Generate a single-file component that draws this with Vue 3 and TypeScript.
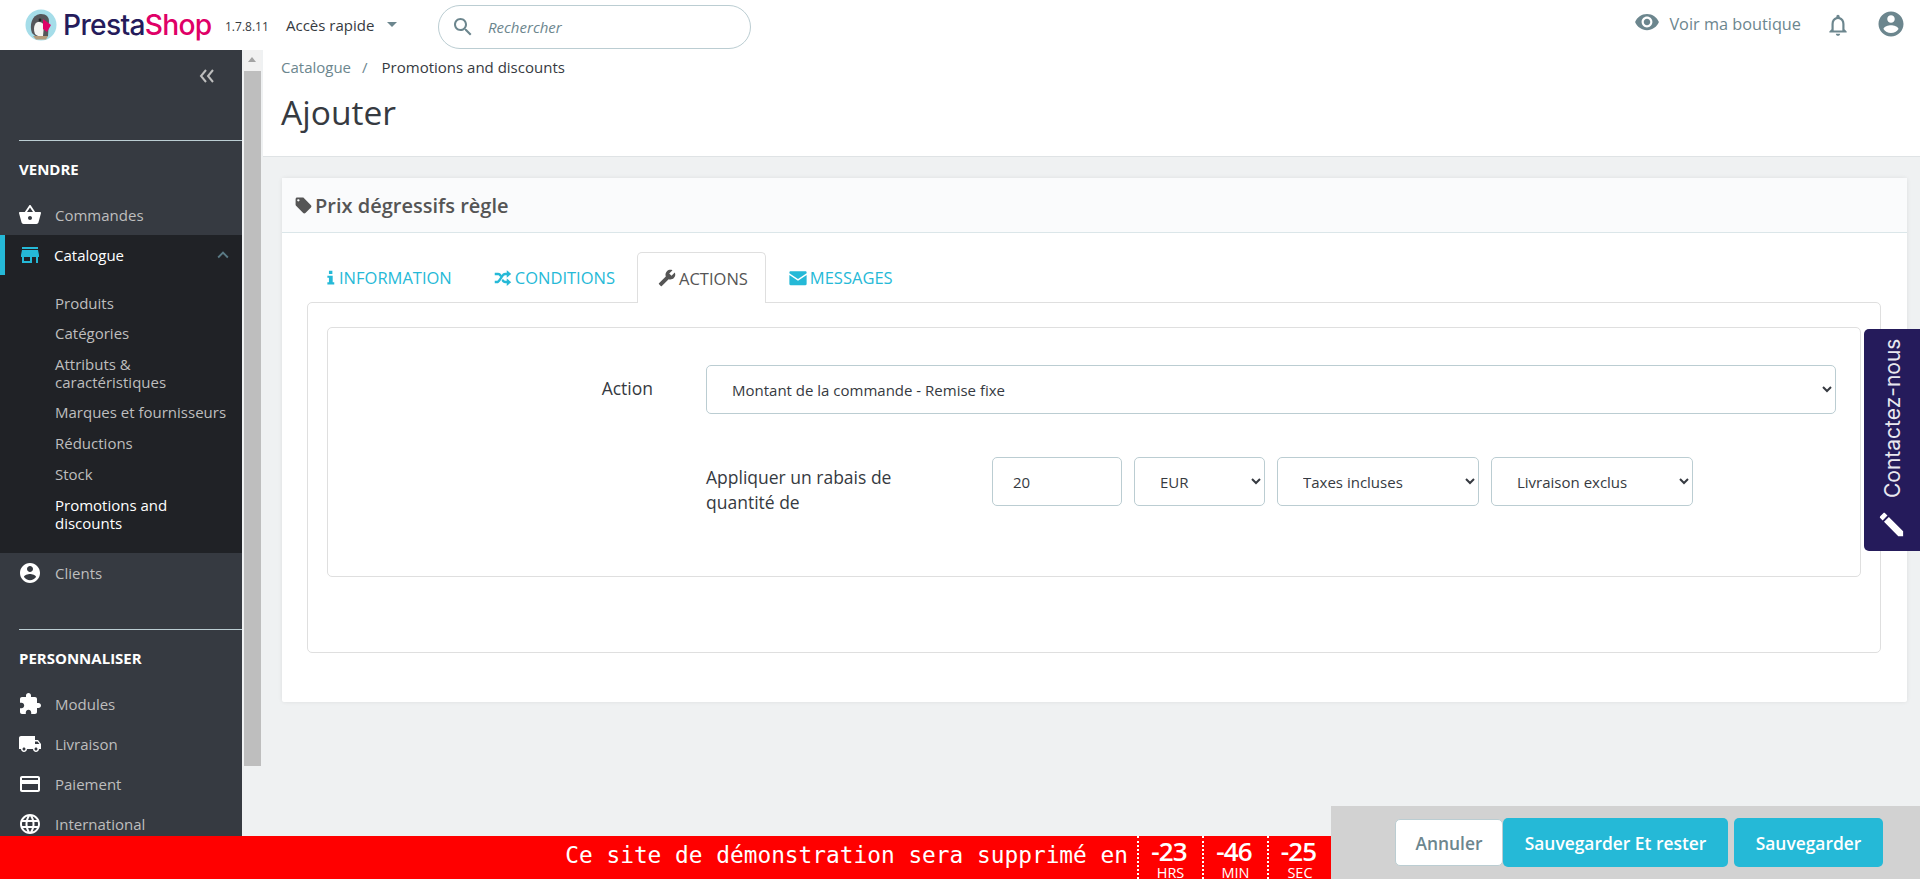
<script setup lang="ts">
const icons: Record<string, string> = {
  basket: 'M17.21 9l-4.38-6.56c-.19-.28-.51-.42-.83-.42-.32 0-.64.14-.83.43L6.79 9H2c-.55 0-1 .45-1 1 0 .09.01.18.04.27l2.54 9.27c.23.84 1 1.46 1.92 1.46h13c.92 0 1.69-.62 1.93-1.46l2.54-9.27L23 10c0-.55-.45-1-1-1h-4.79zM9 9l3-4.4L15 9H9zm3 8c-1.1 0-2-.9-2-2s.9-2 2-2 2 .9 2 2-.9 2-2 2z',
  store: 'M20 4H4v2h16V4zm1 10v-2l-1-5H4l-1 5v2h1v6h10v-6h4v6h2v-6h1zm-9 4H6v-4h6v4z',
  account: 'M12 2C6.48 2 2 6.48 2 12s4.48 10 10 10 10-4.48 10-10S17.52 2 12 2zm0 3c1.66 0 3 1.34 3 3s-1.34 3-3 3-3-1.34-3-3 1.34-3 3-3zm0 14.2c-2.5 0-4.71-1.28-6-3.22.03-1.99 4-3.08 6-3.08 1.99 0 5.97 1.09 6 3.08-1.29 1.94-3.5 3.22-6 3.22z',
  puzzle: 'M20.5 11H19V7c0-1.1-.9-2-2-2h-4V3.5C13 2.12 11.88 1 10.5 1S8 2.12 8 3.5V5H4c-1.1 0-1.99.9-1.99 2v3.8H3.5c1.49 0 2.7 1.21 2.7 2.7s-1.21 2.7-2.7 2.7H2V20c0 1.1.9 2 2 2h3.8v-1.5c0-1.49 1.21-2.7 2.7-2.7 1.49 0 2.7 1.21 2.7 2.7V22H17c1.1 0 2-.9 2-2v-4h1.5c1.38 0 2.5-1.12 2.5-2.5S21.88 11 20.5 11z',
  truck: 'M20 8h-3V4H3c-1.1 0-2 .9-2 2v11h2c0 1.66 1.34 3 3 3s3-1.34 3-3h6c0 1.66 1.34 3 3 3s3-1.34 3-3h2v-5l-3-4zM6 18.5c-.83 0-1.5-.67-1.5-1.5s.67-1.5 1.5-1.5 1.5.67 1.5 1.5-.67 1.5-1.5 1.5zm13.5-9l1.96 2.5H17V9.5h2.5zm-1.5 9c-.83 0-1.5-.67-1.5-1.5s.67-1.5 1.5-1.5 1.5.67 1.5 1.5-.67 1.5-1.5 1.5z',
  card: 'M20 4H4c-1.11 0-1.99.89-1.99 2L2 18c0 1.11.89 2 2 2h16c1.11 0 2-.89 2-2V6c0-1.11-.89-2-2-2zm0 14H4v-6h16v6zm0-10H4V6h16v2z',
  globe: 'M11.99 2C6.47 2 2 6.48 2 12s4.47 10 9.99 10C17.52 22 22 17.52 22 12S17.52 2 11.99 2zm6.93 6h-2.95c-.32-1.25-.78-2.45-1.38-3.56 1.84.63 3.37 1.91 4.33 3.56zM12 4.04c.83 1.2 1.48 2.53 1.91 3.96h-3.82c.43-1.43 1.08-2.76 1.91-3.96zM4.26 14C4.1 13.36 4 12.69 4 12s.1-1.36.26-2h3.38c-.08.66-.14 1.32-.14 2 0 .68.06 1.34.14 2H4.26zm.82 2h2.95c.32 1.25.78 2.45 1.38 3.56-1.84-.63-3.37-1.9-4.33-3.56zm2.95-8H5.08c.96-1.66 2.49-2.93 4.33-3.56C8.81 5.55 8.35 6.75 8.03 8zM12 19.96c-.83-1.2-1.48-2.53-1.91-3.96h3.82c-.43 1.43-1.08 2.76-1.91 3.96zM14.34 14H9.66c-.09-.66-.16-1.32-.16-2 0-.68.07-1.35.16-2h4.68c.09.65.16 1.32.16 2 0 .68-.07 1.34-.16 2zm.25 5.56c.6-1.11 1.06-2.31 1.38-3.56h2.95c-.96 1.65-2.49 2.93-4.33 3.56zM16.36 14c.08-.66.14-1.32.14-2 0-.68-.06-1.34-.14-2h3.38c.16.64.26 1.31.26 2s-.1 1.36-.26 2h-3.38z',
  eye: 'M12 4.5C7 4.5 2.73 7.61 1 12c1.73 4.39 6 7.5 11 7.5s9.27-3.11 11-7.5c-1.73-4.39-6-7.5-11-7.5zM12 17c-2.76 0-5-2.24-5-5s2.24-5 5-5 5 2.24 5 5-2.24 5-5 5zm0-8c-1.66 0-3 1.34-3 3s1.34 3 3 3 3-1.34 3-3-1.34-3-3-3z',
  bell: 'M12 22c1.1 0 2-.9 2-2h-4c0 1.1.9 2 2 2zm6-6v-5c0-3.07-1.63-5.64-4.5-6.32V4c0-.83-.67-1.5-1.5-1.5s-1.5.67-1.5 1.5v.68C7.64 5.36 6 7.92 6 11v5l-2 2v1h16v-1l-2-2zm-2 1H8v-6c0-2.48 1.51-4.5 4-4.5s4 2.02 4 4.5v6z',
  search: 'M15.5 14h-.79l-.28-.27C15.41 12.59 16 11.11 16 9.5 16 5.91 13.09 3 9.5 3S3 5.91 3 9.5 5.91 16 9.5 16c1.61 0 3.09-.59 4.23-1.57l.27.28v.79l5 4.99L20.49 19l-4.99-5zm-6 0C7.01 14 5 11.99 5 9.5S7.01 5 9.5 5 14 7.01 14 9.5 11.99 14 9.5 14z',
  up: 'M12 8l-6 6 1.41 1.41L12 10.83l4.59 4.58L18 14z',
  info: 'M7 9h8.500v10.500H18V23H7v-3.500h2.500V12.500H7zM9.500 1h5.500v5.500H9.500z',
  shuffle: 'M1 5h4.500c2 0 3.300 1.200 4.600 3L8.200 10.600C7.200 9.200 6.400 8.300 5.300 8.300H1zM17 1.500l6 5-6 5V8.300h-2c-1.300 0-2.200 1.200-3.200 2.800l-3.600 5.200C6.900 18 5.800 19 4 19H1v-3.300h2.800c1 0 1.700-.8 2.500-2l3.400-5C11 6.800 12.500 5 15 5h2zM17 12.500l6 5-6 5V19h-2c-2.300 0-3.700-1.500-5-3.300l1.900-2.700c1 1.500 1.900 2.700 3.100 2.700h2z',
  wrench: 'M1.300 19l9.100-9.100c-.9-2.300-.4-5 1.500-6.900 2-2 5-2.400 7.400-1.300L15 6l3 3 4.400-4.300c1.200 2.400.7 5.400-1.300 7.400-1.900 1.900-4.600 2.400-6.900 1.500l-9.100 9.100c-.4.4-1 .4-1.400 0l-2.300-2.300c-.5-.4-.5-1.100-.1-1.400z',
  mail: 'M.500 4.500C.500 3.700 1.200 3 2 3h20c.800 0 1.500.7 1.500 1.500v1L12 13.200.500 5.500zM.500 8L12 15.700 23.500 8v12c0 .8-.7 1.500-1.500 1.500H2C1.200 21.500.500 20.800.500 20z',
  tag: 'M21.41 11.58l-9-9C12.05 2.22 11.55 2 11 2H4c-1.1 0-2 .9-2 2v7c0 .55.22 1.05.59 1.42l9 9c.36.36.86.58 1.41.58.55 0 1.05-.22 1.41-.59l7-7c.37-.36.59-.86.59-1.41 0-.55-.23-1.06-.59-1.42zM5.500 7C4.670 7 4 6.330 4 5.500S4.670 4 5.500 4 7 4.670 7 5.500 6.330 7 5.500 7z',
  pencil: 'M3 17.25V21h3.75L17.81 9.94l-3.75-3.75L3 17.25zM20.71 7.04c.39-.39.39-1.02 0-1.41l-2.34-2.34c-.39-.39-1.02-.39-1.41 0l-1.83 1.83 3.75 3.75 1.83-1.83z',
}

const subItems = [
  { label: 'Produits' },
  { label: 'Catégories' },
  { label: 'Attributs & caractéristiques' },
  { label: 'Marques et fournisseurs' },
  { label: 'Réductions' },
  { label: 'Stock' },
  { label: 'Promotions and discounts', active: true },
]

const shopItems = [
  { label: 'Modules', icon: 'puzzle' },
  { label: 'Livraison', icon: 'truck' },
  { label: 'Paiement', icon: 'card' },
  { label: 'International', icon: 'globe' },
]

const tabs = [
  { label: 'INFORMATION', icon: 'info' },
  { label: 'CONDITIONS', icon: 'shuffle' },
  { label: 'ACTIONS', icon: 'wrench', active: true },
  { label: 'MESSAGES', icon: 'mail' },
]

const counters = [
  { value: '-23', unit: 'HRS' },
  { value: '-46', unit: 'MIN' },
  { value: '-25', unit: 'SEC' },
]
</script>

<template>
  <div class="app">
    <header class="topbar">
      <div class="logo">
        <svg class="logo-mark" viewBox="0 0 32 32" width="32" height="32">
          <circle cx="16" cy="16" r="15.500" fill="#a5dde9" />
          <path d="M7 24C4 16 7 6 15 5c6-.5 9 3 9 7l-1 15c-5 3-12 2-16-3z" fill="#55565a" />
          <path d="M10 25c-2-5-1-11 3-12 3-.5 5 1 6 3l-1 11c-3 1-6 0-8-2z" fill="#f4f4f2" />
          <circle cx="15" cy="11" r="1.400" fill="#222" />
          <path d="M18 10l8 6-4 7-4-3z" fill="#df0067" />
          <path d="M8 27h15l-2 3.500H11z" fill="#b29a7a" />
        </svg>
        <span class="logo-text"><span class="presta">Presta</span><span class="shop">Shop</span></span>
      </div>
      <span class="version">1.7.8.11</span>
      <div class="quick">Accès rapide<span class="caret"></span></div>
      <div class="search">
        <svg class="search-icon" viewBox="0 0 24 24"><path :d="icons.search" /></svg>
        <input class="search-input" type="text" placeholder="Rechercher" />
      </div>
      <div class="top-right">
        <svg class="ico-eye" viewBox="0 0 24 24"><path :d="icons.eye" /></svg>
        <span class="shop-link">Voir ma boutique</span>
        <svg class="ico-bell" viewBox="0 0 24 24"><path :d="icons.bell" /></svg>
        <svg class="ico-user" viewBox="0 0 24 24"><path :d="icons.account" /></svg>
      </div>
    </header>

    <div class="body">
      <aside class="sidebar">
        <div class="collapse">
          <svg viewBox="0 0 18 14" width="18" height="14">
            <path d="M8 1L3 7l5 6M15 1l-5 6 5 6" fill="none" stroke="#bebebe" stroke-width="2" />
          </svg>
        </div>
        <div class="section-title">VENDRE</div>
        <div class="nav-row">
          <svg class="nav-ico" viewBox="0 0 24 24"><path :d="icons.basket" /></svg>
          <span>Commandes</span>
        </div>
        <div class="open-group">
          <div class="nav-row active">
            <svg class="nav-ico" viewBox="0 0 24 24"><path :d="icons.store" /></svg>
            <span>Catalogue</span>
            <svg class="chev" viewBox="0 0 24 24"><path :d="icons.up" /></svg>
          </div>
          <ul class="sub">
            <li v-for="s in subItems" :key="s.label" :class="{ on: s.active }">{{ s.label }}</li>
          </ul>
        </div>
        <div class="nav-row">
          <svg class="nav-ico" viewBox="0 0 24 24"><path :d="icons.account" /></svg>
          <span>Clients</span>
        </div>
        <div class="section-title second">PERSONNALISER</div>
        <div v-for="n in shopItems" :key="n.label" class="nav-row">
          <svg class="nav-ico" viewBox="0 0 24 24"><path :d="icons[n.icon]" /></svg>
          <span>{{ n.label }}</span>
        </div>
      </aside>

      <div class="scroll">
        <div class="scroll-arrow"></div>
        <div class="scroll-thumb"></div>
      </div>

      <main class="main">
        <div class="page-head">
          <div class="crumbs">
            <span class="crumb">Catalogue</span>
            <span class="slash">/</span>
            <span class="crumb-cur">Promotions and discounts</span>
          </div>
          <h1>Ajouter</h1>
        </div>

        <section class="panel">
          <div class="panel-head">
            <svg class="tag" viewBox="0 0 24 24"><path :d="icons.tag" /></svg>
            <span>Prix dégressifs règle</span>
          </div>
          <div class="panel-body">
            <div class="tabs">
              <div v-for="t in tabs" :key="t.label" class="tab" :class="{ active: t.active }">
                <svg class="tab-ico" viewBox="0 0 24 24"><path :d="icons[t.icon]" /></svg>
                <span>{{ t.label }}</span>
              </div>
            </div>
            <div class="pane">
              <div class="form-box">
                <div class="form-row">
                  <label class="lbl action-lbl">Action</label>
                  <select class="ctl wide">
                    <option>Montant de la commande - Remise fixe</option>
                  </select>
                </div>
                <div class="form-row second-row">
                  <div class="lbl"></div>
                  <div class="apply">Appliquer un rabais de quantité de</div>
                  <input class="ctl amount" type="text" value="20" />
                  <select class="ctl cur"><option>EUR</option></select>
                  <select class="ctl tax"><option>Taxes incluses</option></select>
                  <select class="ctl ship"><option>Livraison exclus</option></select>
                </div>
              </div>
            </div>
          </div>
        </section>
      </main>
    </div>

    <div class="contact">
      <span class="contact-text">Contactez-nous</span>
      <svg class="contact-ico" viewBox="0 0 24 24"><path :d="icons.pencil" /></svg>
    </div>

    <div class="demo">
      <span class="demo-text">Ce site de démonstration sera supprimé en</span>
      <div v-for="c in counters" :key="c.unit" class="count">
        <span class="count-v">{{ c.value }}</span>
        <span class="count-u">{{ c.unit }}</span>
      </div>
    </div>

    <div class="actions">
      <button class="btn ghost">Annuler</button>
      <button class="btn primary stay">Sauvegarder Et rester</button>
      <button class="btn primary save">Sauvegarder</button>
    </div>
  </div>
</template>

<style>
html, body { margin: 0; padding: 0; overflow: hidden; }
</style>

<style scoped>
.app {
  position: relative;
  width: 1920px;
  height: 879px;
  overflow: hidden;
  display: flex;
  flex-direction: column;
  background: #eff1f2;
  font-family: "Open Sans", sans-serif;
  color: #363a41;
}

/* top bar */
.topbar {
  height: 50px;
  flex: none;
  background: #fff;
  display: flex;
  align-items: center;
  padding-left: 25px;
}
.logo { display: flex; align-items: center; width: 200px; flex: none; }
.logo-mark { flex: none; margin-top: -1px; }
.logo-text {
  margin-left: 6px;
  font-family: Inter, sans-serif;
  font-size: 28.200px;
  font-weight: 500;
  letter-spacing: -0.700px;
  line-height: 32px;
}
.presta { color: #251b5b; }
.shop { color: #df0067; }
.version { font-size: 12px; width: 61px; flex: none; color: #363a41; margin-top: 3px; }
.quick { font-size: 15px; width: 152px; flex: none; color: #363a41; display: flex; align-items: center; margin-top: -1px; }
.caret {
  width: 0;
  height: 0;
  margin-left: 13px;
  border-left: 5px solid transparent;
  border-right: 5px solid transparent;
  border-top: 5px solid #6c868e;
}
.search {
  width: 313px;
  height: 44px;
  margin-top: 4px;
  box-sizing: border-box;
  border: 1px solid #bbcdd2;
  border-radius: 22px;
  display: flex;
  align-items: center;
  padding-left: 12px;
}
.search-icon { width: 24px; height: 24px; fill: #6c868e; flex: none; }
.search-input {
  border: 0;
  outline: 0;
  margin-left: 11px;
  font: italic 15px "Open Sans", sans-serif;
  color: #6c868e;
  width: 240px;
  background: transparent;
}
.search-input::placeholder { color: #6c868e; opacity: 1; }
.top-right { margin-left: auto; display: flex; align-items: center; padding-right: 14px; }
.ico-eye { width: 26px; height: 26px; fill: #6c868e; margin-top: -6px; }
.shop-link { font-size: 16.300px; color: #6c868e; margin-left: 9px; margin-top: -2px; }
.ico-bell { width: 26px; height: 26px; fill: #6c868e; margin-left: 24px; }
.ico-user { width: 30px; height: 30px; fill: #6c868e; margin-left: 25px; margin-top: -2px; }

.body { flex: 1; display: flex; min-height: 0; }

/* sidebar */
.sidebar {
  width: 242px;
  flex: none;
  background: #363a41;
  overflow: hidden;
}
.collapse {
  height: 90px;
  box-sizing: border-box;
  padding: 19px 26px 0 0;
  display: flex;
  justify-content: flex-end;
  align-items: flex-start;
}
.section-title {
  margin-left: 19px;
  height: 55px;
  box-sizing: border-box;
  border-top: 1px solid #bbcdd2;
  padding-top: 18px;
  color: #fff;
  font-size: 15px;
  font-weight: 700;
  line-height: 20px;
}
.section-title.second { margin-top: 36px; }
.nav-row {
  height: 40px;
  display: flex;
  align-items: center;
  padding-left: 19px;
  color: #bebebe;
  font-size: 15px;
}
.nav-ico { width: 24px; height: 24px; fill: #fff; flex: none; margin-right: 13px; margin-left: -1px; }
.open-group { background: #202226; }
.nav-row.active {
  color: #fff;
  box-sizing: border-box;
  border-left: 5px solid #25b9d7;
  padding-left: 14px;
}
.nav-row.active .nav-ico { fill: #25b9d7; margin-right: 12px; }
.chev { width: 22px; height: 22px; fill: #5a7a85; margin-left: auto; margin-right: 8px; }
.sub {
  list-style: none;
  margin: 0;
  padding: 13px 14px 15px 55px;
}
.sub li {
  padding: 6px 0;
  font-size: 15px;
  line-height: 18px;
  color: #bebebe;
}
.sub li:nth-child(5), .sub li:nth-child(6), .sub li:nth-child(3), .sub li.on { padding-top: 7px; }
.sub li.on { color: #fff; }

/* fake scrollbar */
.scroll {
  width: 17px;
  flex: none;
  margin-left: 2px;
  background: #f1f1f1;
  height: 716px;
  display: flex;
  flex-direction: column;
}
.scroll-arrow {
  height: 21px;
  flex: none;
  position: relative;
}
.scroll-arrow::after {
  content: "";
  position: absolute;
  left: 4px;
  top: 7px;
  border-left: 4px solid transparent;
  border-right: 4px solid transparent;
  border-bottom: 5px solid #a3a3a3;
}
.scroll-thumb { flex: 1; background: #bebebe; }

/* main */
.main { flex: 1; min-width: 0; padding-left: 2px; }
.page-head {
  height: 107px;
  box-sizing: border-box;
  background: #fff;
  border-bottom: 1px solid #dfe3e5;
  padding: 7px 0 0 18px;
}
.crumbs { font-size: 15px; line-height: 21px; display: flex; }
.crumb { color: #6c868e; }
.slash { color: #6c868e; margin: 0 14px 0 11px; }
.crumb-cur { color: #363a41; }
h1 {
  margin: 11px 0 0;
  font-size: 33.600px;
  font-weight: 400;
  line-height: 46px;
  color: #363a41;
}
.panel {
  margin: 21px 13px 0 19px;
  background: #fff;
  box-shadow: 0 0 4px rgba(0, 0, 0, 0.08);
  border-radius: 2px;
}
.panel-head {
  height: 55px;
  box-sizing: border-box;
  background: #fafbfc;
  border-bottom: 1px solid #dbe6e9;
  display: flex;
  align-items: center;
  padding-left: 12px;
  font-size: 20px;
  font-weight: 600;
  color: #555;
}
.tag { width: 19px; height: 19px; fill: #555; margin-right: 2px; flex: none; }
.panel-body { padding: 19px 26px 49px 25px; }
.tabs { display: flex; height: 51px; margin-left: -3px; position: relative; z-index: 1; }
.tab {
  display: flex;
  align-items: center;
  height: 51px;
  box-sizing: border-box;
  padding: 0 19px;
  font-size: 16.500px;
  color: #25b9d7;
  margin-right: 3px;
}
.tab-ico { width: 15px; height: 15px; fill: #25b9d7; margin-right: 1px; flex: none; }
.tab:nth-child(2) .tab-ico, .tab:nth-child(3) .tab-ico, .tab:nth-child(4) .tab-ico { width: 20px; height: 18px; margin-right: 2px; }
.tab.active {
  color: #555;
  background: #fff;
  border: 1px solid #dfdfdf;
  border-bottom: 0;
  border-radius: 5px 5px 0 0;
  padding-right: 17px;
}
.tab.active .tab-ico { fill: #555; }
.pane {
  height: 351px;
  box-sizing: border-box;
  margin-top: -1px;
  border: 1px solid #dfdfdf;
  border-radius: 5px;
  padding: 24px 19px 0 19px;
}
.form-box {
  height: 250px;
  box-sizing: border-box;
  border: 1px solid #dfdfdf;
  border-radius: 5px;
  padding: 37px 24px 0 0;
}
.form-row { display: flex; align-items: center; }
.second-row { margin-top: 43px; align-items: flex-start; }
.lbl {
  width: 325px;
  flex: none;
  text-align: right;
  font-size: 17.500px;
  color: #363a41;
  margin-right: 53px;
}
.action-lbl { margin-top: -4px; }
.apply {
  width: 286px;
  flex: none;
  box-sizing: border-box;
  padding: 8px 90px 0 0;
  font-size: 17.500px;
  line-height: 25px;
  color: #363a41;
}
.ctl {
  height: 49px;
  box-sizing: border-box;
  border: 1px solid #bbcdd2;
  border-radius: 5px;
  background-color: #fff;
  font: 15px "Open Sans", sans-serif;
  color: #363a41;
  padding: 0 8px 0 21px;
  outline: 0;
}
.wide { flex: 1; min-width: 0; }
.amount { width: 130px; margin-right: 12px; padding-left: 20px; }
.cur { width: 131px; margin-right: 12px; }
.tax { width: 202px; margin-right: 12px; }
.ship { width: 202px; }

/* floating pieces */
.contact {
  position: absolute;
  right: 0;
  top: 329px;
  width: 56px;
  height: 222px;
  box-sizing: border-box;
  background: #251b5b;
  writing-mode: vertical-rl;
  transform: rotate(180deg);
  display: flex;
  align-items: center;
  justify-content: flex-end;
  padding: 11px 0 0;
  gap: 11px;
  flex-direction: row-reverse;
  color: #e9e8f0;
  font-family: Inter, sans-serif;
  font-size: 21px;
  border-radius: 0 5px 5px 0;
}
.contact-text { white-space: nowrap; flex: none; }
.contact-ico { width: 31px; height: 31px; flex: none; fill: #fff; transform: rotate(90deg); }

.demo {
  position: absolute;
  left: 0;
  bottom: 0;
  width: 1331px;
  height: 43px;
  background: #f00;
  color: #fff;
  display: flex;
  justify-content: flex-end;
}
.demo-text {
  font-family: "DejaVu Sans Mono", monospace;
  font-size: 22.800px;
  line-height: 39px;
  margin-right: 9px;
}
.count {
  width: 65px;
  box-sizing: border-box;
  border-left: 2px dotted #fff;
  display: flex;
  flex-direction: column;
  align-items: center;
}
.count:last-child { width: 64px; }
.count-v { font-size: 26px; font-weight: 600; line-height: 31px; letter-spacing: -0.800px; margin-left: -3px; }
.count-u { font-size: 14.500px; line-height: 12px; }

.actions {
  position: absolute;
  left: 1331px;
  right: 0;
  bottom: 0;
  height: 73px;
  background: #d2d2d2;
  box-sizing: border-box;
  display: flex;
  align-items: flex-start;
  padding: 12px 0 0 64px;
}
.btn {
  height: 49px;
  box-sizing: border-box;
  border: 1px solid transparent;
  border-radius: 5px;
  font: 600 17.400px "Open Sans", sans-serif;
  padding: 0;
}
.ghost { width: 108px; height: 47px; margin-top: 1px; background: #fff; border-color: #bbcdd2; color: #6c868e; }
.primary { background: #25b9d7; color: #fff; }
.stay { width: 225px; }
.save { width: 149px; margin-left: 6px; }
</style>
